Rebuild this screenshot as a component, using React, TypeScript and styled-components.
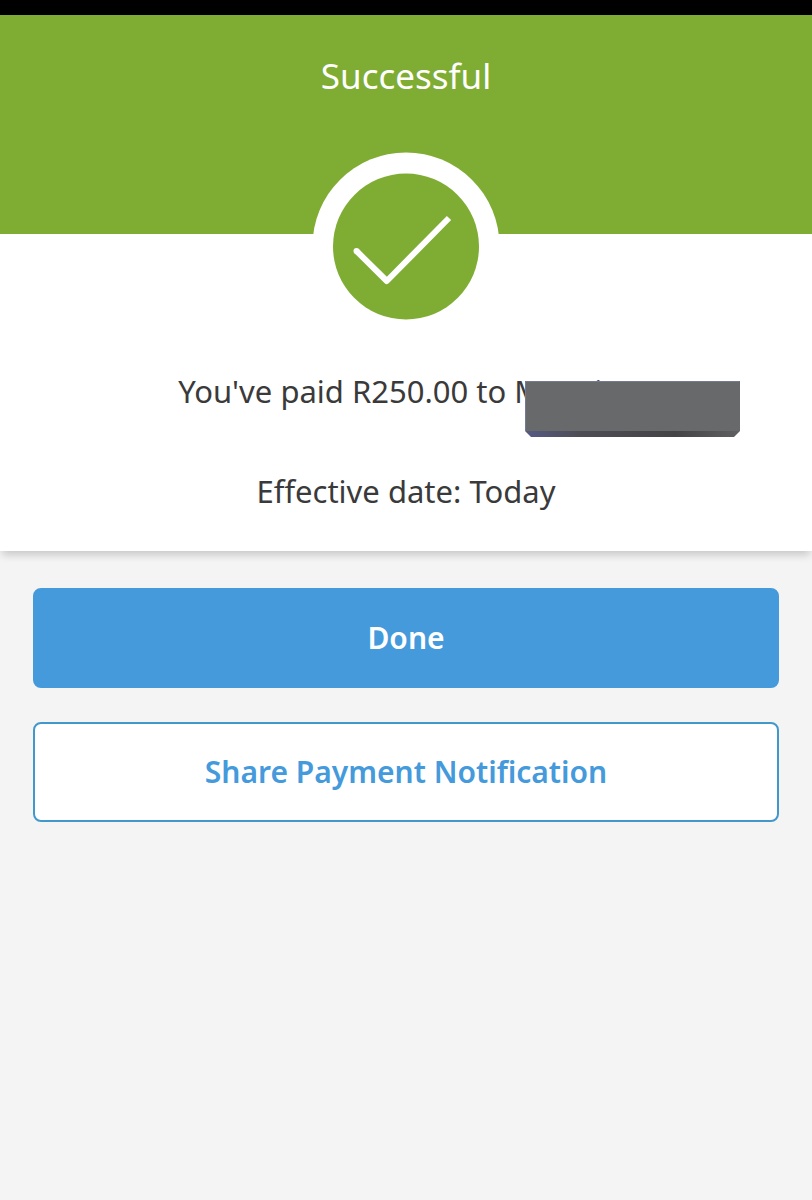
import React from 'react';
import styled, { createGlobalStyle } from 'styled-components';

const GlobalStyle = createGlobalStyle`
  *, *::before, *::after {
    box-sizing: border-box;
  }
  body {
    margin: 0;
    background: #f4f4f4;
    color: #3a3a3a;
    font-family: 'Noto Sans', 'Open Sans', sans-serif;
  }
`;

const Page = styled.main`
  display: flex;
  flex-direction: column;
  min-height: 100vh;
`;

const StatusBar = styled.div`
  height: 15px;
  background: #000;
`;

const Header = styled.header`
  padding: 36px 32px 133px;
  background: #7fad33;
  text-align: center;
`;

const Title = styled.h1`
  margin: 0;
  color: #fff;
  font-size: 35px;
  font-weight: 400;
  line-height: 50px;
`;

const Summary = styled.section`
  display: flex;
  flex-direction: column;
  align-items: center;
  padding-bottom: 35px;
  background: #fff;
  box-shadow: 0 6px 8px -2px rgba(0, 0, 0, 0.18);
`;

const Badge = styled.svg`
  display: block;
  width: 188px;
  height: 188px;
  margin: -82px 0 26px;
`;

const Details = styled.div`
  display: flex;
  flex-direction: column;
  gap: 50px;
  text-align: center;
`;

const Line = styled.p`
  margin: 0;
  font-size: 31px;
  line-height: 50px;
`;

const Recipient = styled.span`
  position: relative;
  white-space: nowrap;
`;

const Cover = styled.svg`
  position: absolute;
  top: 10px;
  left: 11px;
  width: 215px;
  height: 57px;
`;

const Actions = styled.div`
  display: flex;
  flex-direction: column;
  gap: 34px;
  padding: 37px 33px;
`;

const Button = styled.button<{ $outline?: boolean }>`
  width: 100%;
  height: 100px;
  padding: 0 16px;
  border: 2px solid ${({ $outline }) => ($outline ? '#4298cb' : '#449adb')};
  border-radius: 8px;
  background: ${({ $outline }) => ($outline ? '#fff' : '#449adb')};
  color: ${({ $outline }) => ($outline ? '#449adb' : '#fff')};
  font-family: inherit;
  font-size: 30px;
  font-weight: 600;
  line-height: 50px;
  cursor: pointer;
`;

function SuccessBadge() {
  return (
    <Badge viewBox="0 0 188 188" aria-hidden="true">
      <circle cx="94" cy="94" r="93.5" fill="#fff" />
      <circle cx="94" cy="94.5" r="73" fill="#7fad33" />
      <path
        d="M44.5 99L74.8 129L137 66"
        fill="none"
        stroke="#fff"
        strokeWidth="6"
        strokeLinejoin="round"
      />
      <circle cx="44.5" cy="99" r="3" fill="#fff" />
    </Badge>
  );
}

function NameCover() {
  return (
    <Cover viewBox="0 0 215 57" aria-hidden="true">
      <defs>
        <linearGradient id="edge" x1="0" x2="1" y1="0" y2="0">
          <stop offset="0" stopColor="#565a85" />
          <stop offset="0.25" stopColor="#4e4d55" />
          <stop offset="0.7" stopColor="#444446" />
          <stop offset="1" stopColor="#606062" />
        </linearGradient>
      </defs>
      <path d="M0 50H215V51L209 57H6L0 51Z" fill="url(#edge)" />
      <path d="M0 1H215V51H0Z" fill="#68696b" />
      <path d="M0.5 51V1.5H214.5" fill="none" stroke="#747a91" />
    </Cover>
  );
}

export default function App() {
  return (
    <>
      <GlobalStyle />
      <Page>
        <StatusBar />
        <Header>
          <Title>Successful</Title>
        </Header>
        <Summary>
          <SuccessBadge />
          <Details>
            <Line>
              You've paid R250.00 to{' '}
              <Recipient>
                {'M••••\u2009i••·'}
                <NameCover />
              </Recipient>
            </Line>
            <Line>Effective date: Today</Line>
          </Details>
        </Summary>
        <Actions>
          <Button type="button">Done</Button>
          <Button type="button" $outline>
            Share Payment Notification
          </Button>
        </Actions>
      </Page>
    </>
  );
}
